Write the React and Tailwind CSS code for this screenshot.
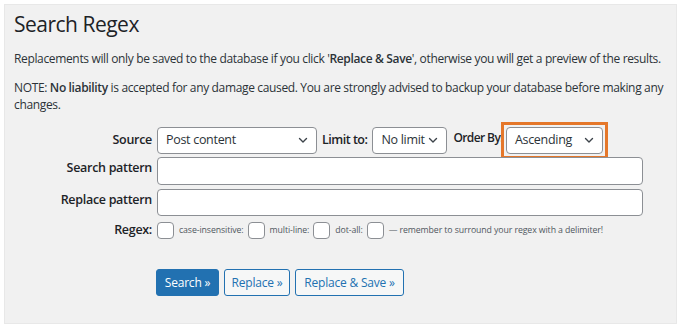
import React from "react";

const Chevron = () => (
  <svg width="12" height="12" viewBox="0 0 12 12" className="shrink-0">
    <path d="M2.5 4.5 L6 8 L9.5 4.5" fill="none" stroke="#3c434a" strokeWidth="1.4" strokeLinecap="round" strokeLinejoin="round" />
  </svg>
);

const Select = ({ label, w, extra = "" }) => (
  <div className={`h-[27px] ${w} bg-white border border-[#8c8f94] rounded-[4px] flex items-center justify-between pl-[8px] pr-[7px] text-[12.5px] tracking-[-0.3px] text-[#2c3338] whitespace-nowrap shrink-0 ${extra}`}>
    <span>{label}</span>
    <Chevron />
  </div>
);

const Box = () => (
  <span className="inline-block w-[17px] h-[17px] bg-white border border-[#8c8f94] rounded-[4px] shrink-0" />
);

const Label = ({ children, extra = "" }) => (
  <div className={`w-[152px] shrink-0 text-right pr-[5px] text-[12.5px] font-semibold tracking-[-0.3px] text-[#1d2327] ${extra}`}>{children}</div>
);

export default function App() {
  return (
    <div className="w-[685px] h-[332px] bg-white pt-[4px] pl-[4px]" style={{ fontFamily: '"Open Sans", "Noto Sans", sans-serif' }}>
      <div className="w-[673px] h-[320px] bg-[#f1f1f1] border border-[#e8e8e8] text-[#1d2327]">
        <h1 className="text-[21px] leading-[28px] ml-[9px] mt-[5px] tracking-[-0.5px]">Search Regex</h1>
        <p className="text-[12px] leading-[17px] ml-[9px] mt-[12px] tracking-[-0.35px] text-[#2c3338]">
          Replacements will only be saved to the database if you click '<b className="font-semibold">Replace &amp; Save</b>', otherwise you will get a preview of the results.
        </p>
        <p className="text-[12px] leading-[17px] ml-[9px] mr-[10px] mt-[12px] tracking-[-0.35px] text-[#2c3338]">
          NOTE: <b className="font-semibold">No liability</b> is accepted for any damage caused. You are strongly advised to backup your database before making any changes.
        </p>

        <div className="mt-[9px] flex items-center h-[36px]">
          <Label>Source</Label>
          <Select label="Post content" w="w-[160px]" />
          <span className="ml-[5px] text-[12.5px] font-semibold tracking-[-0.5px] whitespace-nowrap">Limit to:</span>
          <Select label="No limit" w="w-[75px]" extra="ml-[5px]" />
          <span className="ml-[6px] text-[12px] font-semibold tracking-[-0.6px] self-start mt-[7px] whitespace-nowrap">Order By:</span>
          <div className="border-[3px] border-[#e5772a] p-[2px] -ml-[2px] shrink-0">
            <Select label="Ascending" w="w-[97px]" extra="h-[26px]" />
          </div>
        </div>
        <div className="flex items-start -mt-[1px]">
          <Label extra="mt-[2px]">Search pattern</Label>
          <div className="w-[486px] h-[28px] bg-white border border-[#8c8f94] rounded-[4px]" />
        </div>
        <div className="flex items-start mt-[4px]">
          <Label extra="mt-[2px]">Replace pattern</Label>
          <div className="w-[486px] h-[27px] bg-white border border-[#8c8f94] rounded-[4px]" />
        </div>
        <div className="flex items-center mt-[6px] h-[17px]">
          <Label>Regex:</Label>
          <Box />
          <span className="ml-[5px] mr-[4px] text-[8.75px] tracking-[-0.1px] text-[#50575e] whitespace-nowrap">case-insensitive:</span>
          <Box />
          <span className="ml-[5px] mr-[4px] text-[8.75px] tracking-[-0.1px] text-[#50575e] whitespace-nowrap">multi-line:</span>
          <Box />
          <span className="ml-[5px] mr-[4px] text-[8.75px] tracking-[-0.1px] text-[#50575e] whitespace-nowrap">dot-all:</span>
          <Box />
          <span className="ml-[5px] text-[8.75px] tracking-[-0.1px] text-[#50575e] whitespace-nowrap">— remember to surround your regex with a delimiter!</span>
        </div>

        <div className="flex gap-[5px] ml-[151px] mt-[30px]">
          <div className="h-[27px] w-[63px] justify-center flex items-center bg-[#2271b1] border border-[#2271b1] rounded-[3px] text-white text-[12px] tracking-[-0.2px]">Search »</div>
          <div className="h-[27px] w-[66px] justify-center flex items-center bg-[#f6f7f7] border border-[#2271b1] rounded-[3px] text-[#2271b1] text-[12px] tracking-[-0.2px]">Replace »</div>
          <div className="h-[27px] w-[109px] justify-center flex items-center bg-[#f6f7f7] border border-[#2271b1] rounded-[3px] text-[#2271b1] text-[12px] tracking-[-0.2px]">Replace &amp; Save »</div>
        </div>
      </div>
    </div>
  );
}
